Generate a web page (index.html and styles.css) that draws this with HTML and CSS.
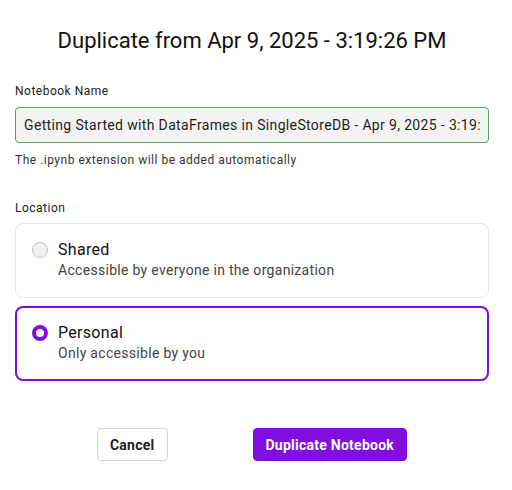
FILE: index.html
```html
<!DOCTYPE html>
<html>
<head>
<meta charset="utf-8">
<link rel="stylesheet" href="styles.css">
</head>
<body>
<div class="dialog">
  <h1 class="title">Duplicate from Apr 9, 2025 - 3:19:26 PM</h1>
  <div class="field">
    <label class="label">Notebook Name</label>
    <div class="input"><span class="input-text">Getting Started with DataFrames in SingleStoreDB - Apr 9, 2025 - 3:19:26 PM</span></div>
    <div class="helper">The .ipynb extension will be added automatically</div>
  </div>
  <div class="field location">
    <div class="label">Location</div>
    <div class="options">
      <div class="option">
        <span class="radio"></span>
        <span class="opt-title">Shared</span>
        <span class="opt-desc">Accessible by everyone in the organization</span>
      </div>
      <div class="option selected">
        <span class="radio checked"></span>
        <span class="opt-title">Personal</span>
        <span class="opt-desc">Only accessible by you</span>
      </div>
    </div>
  </div>
  <div class="actions">
    <button class="btn btn-secondary">Cancel</button>
    <button class="btn btn-primary">Duplicate Notebook</button>
  </div>
</div>
</body>
</html>
```
FILE: styles.css
```css
* { box-sizing: border-box; }
html, body { margin: 0; padding: 0; background: #fff; }
body { font-family: Roboto, "Noto Sans", sans-serif; color: #1f1f1f; }
.dialog { width: 474px; margin-left: 15px; padding-top: 28px; }
.title { margin: 0; font-size: 22px; line-height: 26px; font-weight: 400; text-align: center; color: #111; }
.field { display: flex; flex-direction: column; }
.field:first-of-type { margin-top: 29px; }
.label { font-size: 12px; line-height: 16px; color: #222; letter-spacing: 0.5px; }
.input {
  margin-top: 8px; height: 36px; padding: 0 8px; border: 1px solid #5b9c6e; border-radius: 4px;
  background: #f3f3f3;
}
.input-text {
  display: block; overflow: hidden; white-space: nowrap;
  font-size: 14px; letter-spacing: 0.35px; line-height: 34px; color: #1f1f1f;
}
.helper { margin-top: 9px; font-size: 12px; line-height: 16px; color: #333; letter-spacing: 0.5px; }
.location { margin-top: 32px; }
.options { margin-top: 7px; display: flex; flex-direction: column; gap: 8px; }
.option {
  display: grid; grid-template-columns: 16px 1fr; column-gap: 10px; align-items: center;
  border: 1px solid #e4e4e4; border-radius: 8px; padding: 16px 16px 17px;
}
.option.selected { border: 2px solid #820ddf; padding: 15px 15px 16px; }
.radio { width: 16px; height: 16px; border-radius: 50%; border: 1px solid #c4c4c4; background: #f1f1f1; }
.radio.checked { border: 4.5px solid #820ddf; background: #fff; }
.opt-title { font-size: 16px; line-height: 20px; color: #111; letter-spacing: 0.3px; }
.opt-desc { grid-column: 2; font-size: 14px; line-height: 20px; color: #444; letter-spacing: 0.3px; }
.actions { margin-top: 47px; display: flex; justify-content: center; gap: 85px; }
.btn { font-family: Roboto, sans-serif; font-size: 14px; font-weight: 700; letter-spacing: 0.25px; height: 33px; padding: 0 12px; border-radius: 4px; cursor: pointer; }
.btn-secondary { background: #fff; border: 1px solid #d6d6d6; color: #222; }
.btn-primary { background: #820ddf; border: 1px solid #820ddf; color: #fff; }
```
